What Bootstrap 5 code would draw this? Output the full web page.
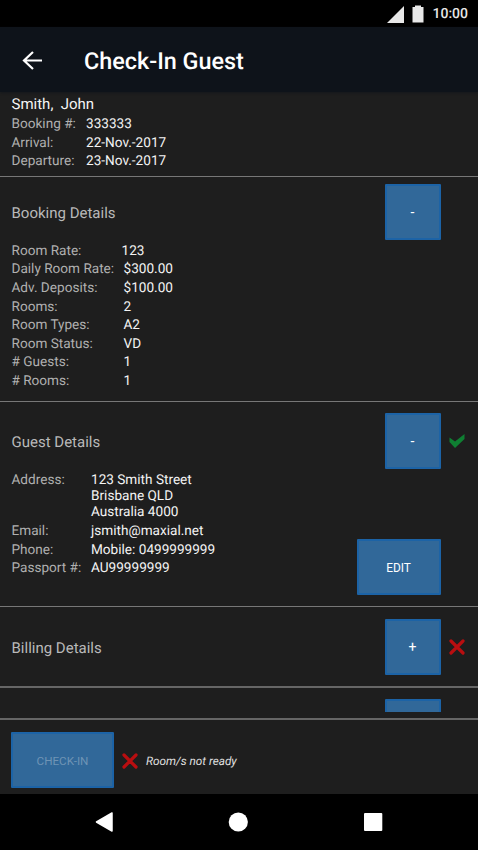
<!DOCTYPE html>
<html lang="en">
<head>
<meta charset="utf-8">
<meta name="viewport" content="width=device-width, initial-scale=1">
<title>Check-In Guest</title>
<link href="https://cdn.jsdelivr.net/npm/bootstrap@5.3.0/dist/css/bootstrap.min.css" rel="stylesheet">
<style>
body{font-family:Roboto,sans-serif;font-size:14px;line-height:18.6px;background:#000;color:#f4f4f4;width:478px;height:850px;overflow:hidden;text-rendering:geometricPrecision}
svg{display:block;flex:none}
.status-bar{height:27px;background:#000;padding:1px 10px 0 0;font-size:14px;font-weight:500;color:#e8e8e8}
.app-bar{height:65px;background:#0e131a;padding:2px 0 0 22px;box-shadow:0 1px 2px #15181c;position:relative}
.app-title{font-size:23.4px;line-height:30px;font-weight:500;margin:1px 0 0 40px;color:#fff}
.pane{background:#1e1e1e;padding-left:11.5px;border-bottom:1px solid #777}
.summary{height:85px;padding-top:3px}
.guest-name{font-size:15px;line-height:19.3px;white-space:pre}
.booking{height:225px;padding-top:7px}
.guest{height:205px;padding-top:11px}
.billing{height:81px;padding-top:12px;border-bottom:2px solid #666}
.more{height:32px;padding-top:11px;border-bottom:2px solid #666}
.clip{height:13px;overflow:hidden}
.head-row{height:56px;padding-right:13.5px}
.head-row h2{font-size:15px;line-height:20px;font-weight:400;margin:0;padding-top:2px;color:#b9b9b9}
.mark-slot{width:16px;margin-left:8px}
.btn-tile{--bs-btn-bg:#316899;--bs-btn-color:#fff;--bs-btn-border-color:#1c63a6;--bs-btn-border-radius:1px;--bs-btn-border-width:2px;--bs-btn-disabled-bg:#316899;--bs-btn-disabled-border-color:#1c63a6;--bs-btn-disabled-color:#6f94b5;--bs-btn-disabled-opacity:1;--bs-btn-padding-x:0;--bs-btn-padding-y:0;width:56px;height:56px;font-size:11.9px;line-height:16px;flex:none}
.btn-edit{width:84px;padding-top:1px}
.btn-checkin{width:103px;padding-top:1px;font-size:11.7px}
.sign{font-size:14px}
dl{font-size:13.6px;margin:0;padding-top:1.8px;display:grid;align-content:start}
dt{font-weight:400;color:#b0b0b0}
dd{margin:0}
.cols-summary{grid-template-columns:74.5px auto;padding-top:.9px}
.cols-booking{grid-template-columns:112px auto}
.cols-guest{grid-template-columns:79.5px auto}
.address{line-height:16.35px;padding:1px 0 1.3px}
.rate{margin-left:-2px}
.guest-body{height:126px;padding-right:37.5px}
.foot{height:74px;padding:12px 0 0 11px;background:#1e1e1e}
.foot-mark{padding-bottom:5px}
.foot-note{font-size:11.75px;font-style:italic;margin-left:8px;padding-top:2px;color:#e0e0e0}
.nav-keys{height:56px;background:#000}
</style>
<script src="https://cdn.jsdelivr.net/npm/bootstrap@5.3.0/dist/js/bootstrap.bundle.min.js"></script>
</head>
<body>
<svg width="0" height="0" class="position-absolute" aria-hidden="true">
  <symbol id="cross" viewBox="0 0 16 16"><path d="M2 2 14 14M14 2 2 14" stroke="#b90e10" stroke-width="3.2" stroke-linecap="round"/></symbol>
</svg>
<div class="status-bar d-flex align-items-center justify-content-end">
  <svg width="17" height="17" viewBox="0 0 17 17"><path d="M0 17 17 0V17Z" fill="#e8e8e8"/></svg>
  <svg class="ms-2" width="12" height="18" viewBox="0 0 12 18"><path d="M3 0.5h6V2h2.500v15.500h-11V2H3Z" fill="#e8e8e8"/></svg>
  <span class="ps-2">10:00</span>
</div>
<header class="app-bar d-flex align-items-center">
  <svg width="22" height="20" viewBox="0 0 22 20"><path d="M20 9.500H2M11 1 2 9.500 11 18" fill="none" stroke="#fff" stroke-width="2.2"/></svg>
  <h1 class="app-title">Check-In Guest</h1>
</header>
<main>
  <section class="pane summary">
    <div class="guest-name">Smith,  John</div>
    <dl class="cols-summary">
      <dt>Booking #:</dt><dd>333333</dd>
      <dt>Arrival:</dt><dd>22-Nov.-2017</dd>
      <dt>Departure:</dt><dd>23-Nov.-2017</dd>
    </dl>
  </section>
  <section class="pane booking">
    <div class="head-row d-flex align-items-center">
      <h2 class="me-auto">Booking Details</h2>
      <button class="btn btn-tile sign" type="button">-</button>
      <span class="mark-slot"></span>
    </div>
    <dl class="cols-booking">
      <dt>Room Rate:</dt><dd class="rate">123</dd>
      <dt>Daily Room Rate:</dt><dd>$300.00</dd>
      <dt>Adv. Deposits:</dt><dd>$100.00</dd>
      <dt>Rooms:</dt><dd>2</dd>
      <dt>Room Types:</dt><dd>A2</dd>
      <dt>Room Status:</dt><dd>VD</dd>
      <dt># Guests:</dt><dd>1</dd>
      <dt># Rooms:</dt><dd>1</dd>
    </dl>
  </section>
  <section class="pane guest">
    <div class="head-row d-flex align-items-center">
      <h2 class="me-auto">Guest Details</h2>
      <button class="btn btn-tile sign" type="button">-</button>
      <span class="mark-slot"><svg width="16" height="16" viewBox="0 0 16 16"><path d="M.5 4.500 6 8.500 15.500 1V6L6 15 .5 9Z" fill="#0f7f32"/></svg></span>
    </div>
    <div class="guest-body d-flex">
      <dl class="cols-guest me-auto">
        <dt>Address:</dt><dd class="address">123 Smith Street<br>Brisbane QLD<br>Australia 4000</dd>
        <dt>Email:</dt><dd>jsmith@maxial.net</dd>
        <dt>Phone:</dt><dd>Mobile: 0499999999</dd>
        <dt>Passport #:</dt><dd>AU99999999</dd>
      </dl>
      <button class="btn btn-tile btn-edit align-self-end" type="button">EDIT</button>
    </div>
  </section>
  <section class="pane billing">
    <div class="head-row d-flex align-items-center">
      <h2 class="me-auto">Billing Details</h2>
      <button class="btn btn-tile sign" type="button">+</button>
      <span class="mark-slot"><svg width="16" height="16"><use href="#cross"/></svg></span>
    </div>
  </section>
  <section class="pane more">
    <div class="clip">
      <div class="head-row d-flex justify-content-end">
        <button class="btn btn-tile" type="button" aria-label="Expand"></button>
        <span class="mark-slot"></span>
      </div>
    </div>
  </section>
</main>
<footer>
  <div class="foot d-flex">
    <button class="btn btn-tile btn-checkin" type="button" disabled>CHECK-IN</button>
    <div class="foot-mark d-flex align-items-center ms-2">
      <svg width="16" height="16"><use href="#cross"/></svg>
      <span class="foot-note">Room/s not ready</span>
    </div>
  </div>
  <div class="nav-keys d-flex align-items-center justify-content-center">
    <svg width="290" height="20" viewBox="0 0 290 20" fill="#fff"><path d="M2.500 10 18 1V19Z" stroke="#fff" stroke-width="1.500" stroke-linejoin="round"/><circle cx="144.300" cy="10" r="9.600"/><rect x="270" y="1" width="18.300" height="18" rx="1"/></svg>
  </div>
</footer>
</body>
</html>
